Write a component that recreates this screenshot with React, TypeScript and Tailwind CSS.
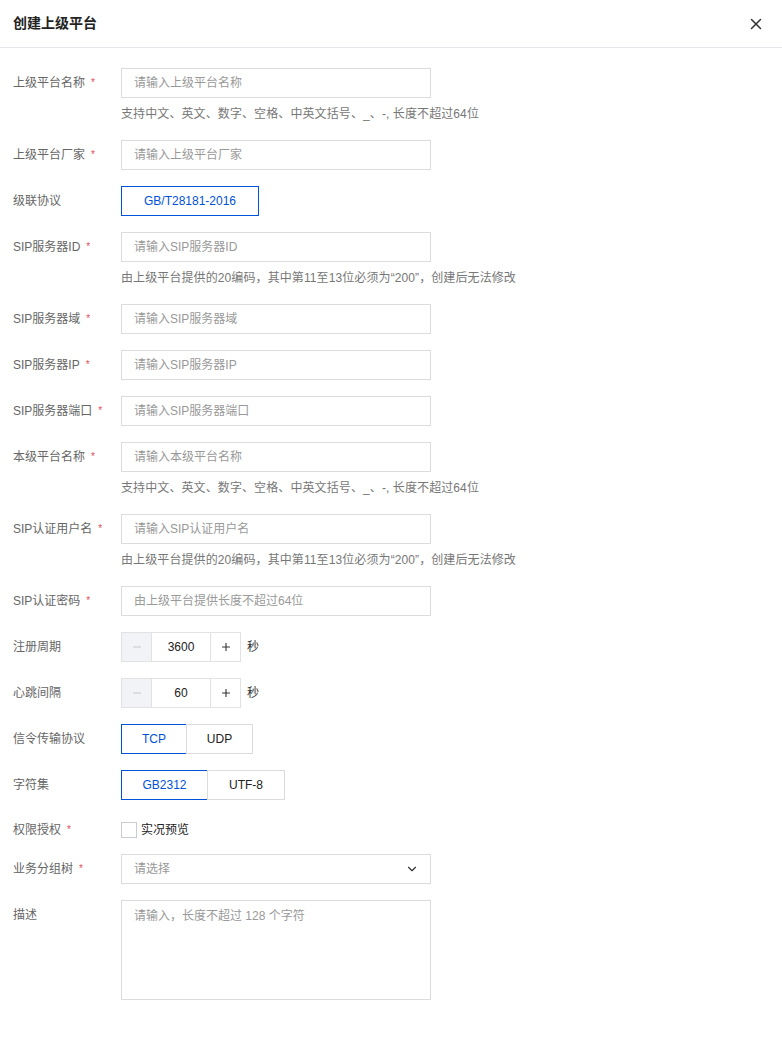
import { ChevronDown, X, Minus, Plus } from 'lucide-react';
import type { ReactNode } from 'react';

// 表单弹窗：创建上级平台
const FONT = { fontFamily: '"Liberation Sans", "Noto Sans CJK SC", sans-serif' };

function Req() {
  return <span className="ml-[6px] text-[10px] leading-none text-[#e34d59]">*</span>;
}

function Row({
  label,
  required,
  help,
  children,
}: {
  label: string;
  required?: boolean;
  help?: string;
  children: ReactNode;
}) {
  return (
    <div className="flex">
      <div className="flex h-[30px] w-[108px] shrink-0 items-center text-[12px] text-[#666]">
        {label}
        {required && <Req />}
      </div>
      <div className="flex flex-col">
        {children}
        {help && <p className="mt-[6px] text-[12px] leading-[20px] text-[#777] tracking-[0.1px]">{help}</p>}
      </div>
    </div>
  );
}

function Input({ placeholder }: { placeholder: string }) {
  return (
    <div className="flex h-[30px] w-[310px] items-center border border-[#dcdcdc] px-3 text-[12px] text-[#999]">
      {placeholder}
    </div>
  );
}

function Segment({ items, active, widths }: { items: string[]; active: number; widths: string[] }) {
  return (
    <div className="flex">
      {items.map((it, i) => (
        <div
          key={it}
          className={`flex h-[30px] items-center justify-center border text-[12px] ${widths[i]} ${
            i === active ? 'border-[#0052d9] text-[#0052d9]' : 'border-[#dcdcdc] text-[#222]'
          } ${i > 0 ? '-ml-px' : ''}`}
        >
          {it}
        </div>
      ))}
    </div>
  );
}

function Stepper({ value }: { value: string }) {
  return (
    <div className="flex items-center">
      <div className="flex h-[30px] border border-[#e2e2e2]">
        <div className="flex w-[29px] items-center justify-center bg-[#f2f3f6] text-[#bbb]">
          <Minus size={12} strokeWidth={1.6} />
        </div>
        <div className="flex w-[60px] items-center justify-center border-x border-[#e2e2e2] text-[12px] text-[#222]">
          {value}
        </div>
        <div className="flex w-[29px] items-center justify-center text-[#333]">
          <Plus size={12} strokeWidth={2.2} />
        </div>
      </div>
      <span className="ml-[6px] text-[12px] text-[#333]">秒</span>
    </div>
  );
}

export default function App() {
  return (
    <div className="min-h-[1052px] w-full bg-white" style={FONT}>
      <div className="flex h-[48px] items-center justify-between border-b border-[#e5e7eb] pl-[13px] pr-[17px]">
        <h1 className="text-[14px] font-bold text-[#222]">创建上级平台</h1>
        <X size={18} strokeWidth={2} className="text-[#333]" />
      </div>

      <div className="flex flex-col gap-4 pl-[13px] pt-5">
        <Row label="上级平台名称" required help="支持中文、英文、数字、空格、中英文括号、_、-, 长度不超过64位">
          <Input placeholder="请输入上级平台名称" />
        </Row>
        <Row label="上级平台厂家" required>
          <Input placeholder="请输入上级平台厂家" />
        </Row>
        <Row label="级联协议">
          <Segment items={['GB/T28181-2016']} active={0} widths={['w-[138px]']} />
        </Row>
        <Row label="SIP服务器ID" required help="由上级平台提供的20编码，其中第11至13位必须为“200”，创建后无法修改">
          <Input placeholder="请输入SIP服务器ID" />
        </Row>
        <Row label="SIP服务器域" required>
          <Input placeholder="请输入SIP服务器域" />
        </Row>
        <Row label="SIP服务器IP" required>
          <Input placeholder="请输入SIP服务器IP" />
        </Row>
        <Row label="SIP服务器端口" required>
          <Input placeholder="请输入SIP服务器端口" />
        </Row>
        <Row label="本级平台名称" required help="支持中文、英文、数字、空格、中英文括号、_、-, 长度不超过64位">
          <Input placeholder="请输入本级平台名称" />
        </Row>
        <Row label="SIP认证用户名" required help="由上级平台提供的20编码，其中第11至13位必须为“200”，创建后无法修改">
          <Input placeholder="请输入SIP认证用户名" />
        </Row>
        <Row label="SIP认证密码" required>
          <Input placeholder="由上级平台提供长度不超过64位" />
        </Row>
        <Row label="注册周期">
          <Stepper value="3600" />
        </Row>
        <Row label="心跳间隔">
          <Stepper value="60" />
        </Row>
        <Row label="信令传输协议">
          <Segment items={['TCP', 'UDP']} active={0} widths={['w-[66px]', 'w-[67px]']} />
        </Row>
        <Row label="字符集">
          <Segment items={['GB2312', 'UTF-8']} active={0} widths={['w-[87px]', 'w-[78px]']} />
        </Row>
        <div className="-mb-[6px] flex h-[28px]">
          <div className="flex w-[108px] items-center text-[12px] text-[#666]">
            权限授权
            <Req />
          </div>
          <div className="flex items-center">
            <span className="h-4 w-4 border border-[#c9ccd4] bg-white" />
            <span className="ml-[4px] text-[12px] text-[#222]">实况预览</span>
          </div>
        </div>
        <Row label="业务分组树" required>
          <div className="flex h-[30px] w-[310px] items-center justify-between border border-[#dcdcdc] pl-3 pr-[11px] text-[12px] text-[#999]">
            请选择
            <ChevronDown size={14} strokeWidth={2} className="text-[#333]" />
          </div>
        </Row>
        <Row label="描述">
          <div className="h-[100px] w-[310px] border border-[#dcdcdc] px-3 py-[6px] text-[12px] leading-[18px] text-[#999]">
            请输入，长度不超过 128 个字符
          </div>
        </Row>
      </div>
    </div>
  );
}
